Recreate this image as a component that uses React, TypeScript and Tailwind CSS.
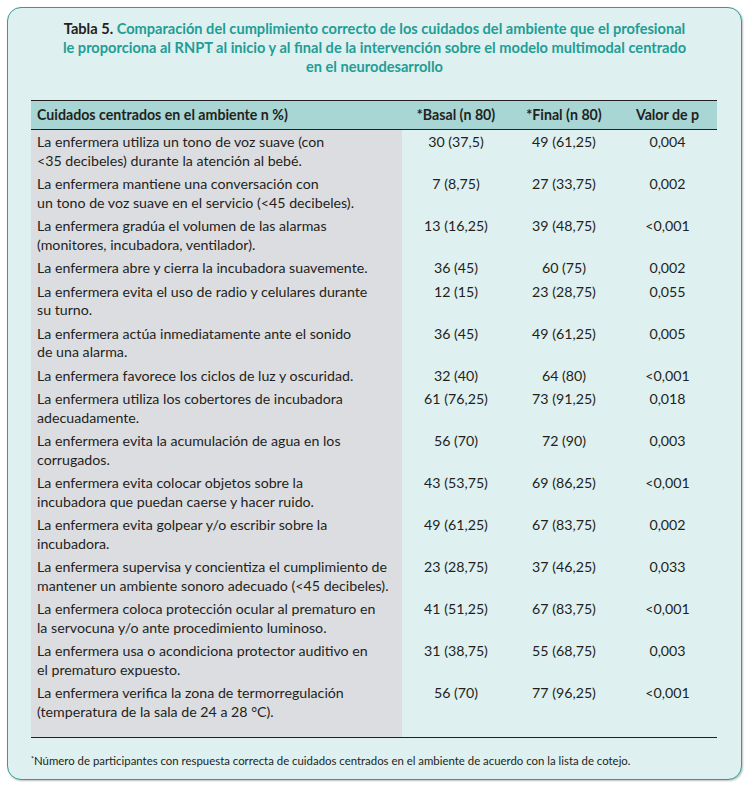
const rows: [string, string, string, string][] = [
  ['La enfermera utiliza un tono de voz suave (con\n<35 decibeles) durante la atención al bebé.', '30 (37,5)', '49 (61,25)', '0,004'],
  ['La enfermera mantiene una conversación con\nun tono de voz suave en el servicio (<45 decibeles).', '7 (8,75)', '27 (33,75)', '0,002'],
  ['La enfermera gradúa el volumen de las alarmas\n(monitores, incubadora, ventilador).', '13 (16,25)', '39 (48,75)', '<0,001'],
  ['La enfermera abre y cierra la incubadora suavemente.', '36 (45)', '60 (75)', '0,002'],
  ['La enfermera evita el uso de radio y celulares durante\nsu turno.', '12 (15)', '23 (28,75)', '0,055'],
  ['La enfermera actúa inmediatamente ante el sonido\nde una alarma.', '36 (45)', '49 (61,25)', '0,005'],
  ['La enfermera favorece los ciclos de luz y oscuridad.', '32 (40)', '64 (80)', '<0,001'],
  ['La enfermera utiliza los cobertores de incubadora\nadecuadamente.', '61 (76,25)', '73 (91,25)', '0,018'],
  ['La enfermera evita la acumulación de agua en los\ncorrugados.', '56 (70)', '72 (90)', '0,003'],
  ['La enfermera evita colocar objetos sobre la\nincubadora que puedan caerse y hacer ruido.', '43 (53,75)', '69 (86,25)', '<0,001'],
  ['La enfermera evita golpear y/o escribir sobre la\nincubadora.', '49 (61,25)', '67 (83,75)', '0,002'],
  ['La enfermera supervisa y concientiza el cumplimiento de\nmantener un ambiente sonoro adecuado (<45 decibeles).', '23 (28,75)', '37 (46,25)', '0,033'],
  ['La enfermera coloca protección ocular al prematuro en\nla servocuna y/o ante procedimiento luminoso.', '41 (51,25)', '67 (83,75)', '<0,001'],
  ['La enfermera usa o acondiciona protector auditivo en\nel prematuro expuesto.', '31 (38,75)', '55 (68,75)', '0,003'],
  ['La enfermera verifica la zona de termorregulación\n(temperatura de la sala de 24 a 28 °C).', '56 (70)', '77 (96,25)', '<0,001'],
]

export default function App() {
  return (
    <div className="w-[754px] h-[805px] bg-white pt-[7px] pl-[7px] font-['Lato','Open_Sans',sans-serif] text-[#231f20]">
      <div className="w-[735px] h-[773px] rounded-[14px] border-[1.5px] border-[#2f9e97] bg-[#dff0f0] shadow-[1px_1px_2px_rgba(0,0,0,0.25)] pt-[11px] px-[23px]">
        <h2 className="text-center text-[14.6px] leading-[19px] font-bold text-[#1f9d96]">
          <span className="text-[#231f20]">Tabla 5.</span> Comparación del cumplimiento correcto de los cuidados del ambiente que el profesional
          <br />
          le proporciona al RNPT al inicio y al final de la intervención sobre el modelo multimodal centrado
          <br />
          en el neurodesarrollo
        </h2>
        <table className="mt-[24px] w-[686px] table-fixed border-collapse text-[14.2px]">
          <colgroup>
            <col className="w-[371px]" />
            <col className="w-[108px]" />
            <col className="w-[108px]" />
            <col className="w-[99px]" />
          </colgroup>
          <thead>
            <tr className="bg-[#a8d6d4] border-t-[1.5px] border-b-[1.5px] border-[#231f20] h-[29px] font-bold">
              <th className="text-left pl-[6px]">Cuidados centrados en el ambiente n %)</th>
              <th className="text-center">*Basal (n 80)</th>
              <th className="text-center">*Final (n 80)</th>
              <th className="text-center">Valor de p</th>
            </tr>
          </thead>
          <tbody className="border-b-[1.5px] border-[#231f20]">
            {rows.map(([label, basal, final, p], i) => {
              const last = i === rows.length - 1
              return (
                <tr key={i} className="align-top leading-[18.5px]">
                  <td className={`bg-[#dcdde0] pl-[6px] pt-[3px] whitespace-pre-line ${last ? 'pb-[16px]' : 'pb-[2px]'}`}>{label}</td>
                  <td className="text-center pt-[3px]">{basal}</td>
                  <td className="text-center pt-[3px]">{final}</td>
                  <td className="text-center pt-[3px]">{p}</td>
                </tr>
              )
            })}
          </tbody>
        </table>
        <p className="mt-[16px] text-[11.4px] leading-[14px] whitespace-nowrap">
          <sup className="text-[7px]">*</sup>Número de participantes con respuesta correcta de cuidados centrados en el ambiente de acuerdo con la lista de cotejo.
        </p>
      </div>
    </div>
  )
}
